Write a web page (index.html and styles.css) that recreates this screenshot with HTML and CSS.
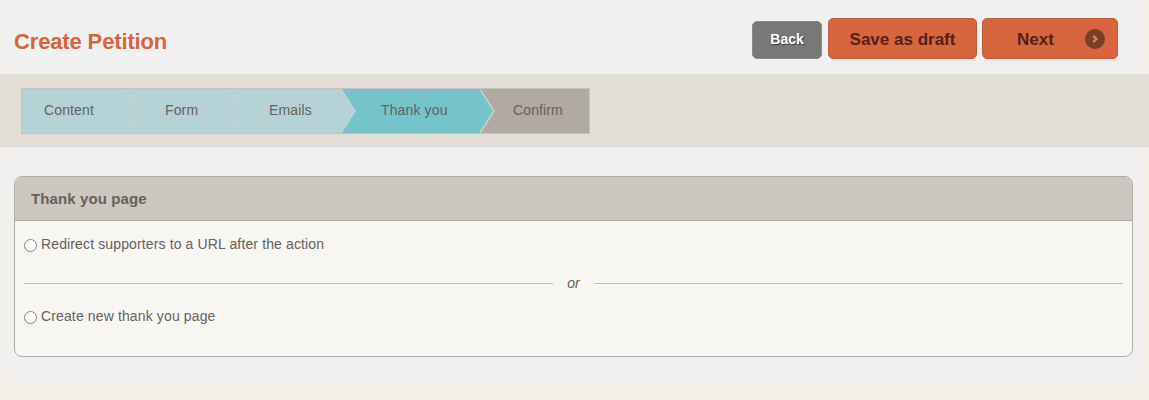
FILE: index.html
```html
<!DOCTYPE html>
<html lang="en">
<head>
<meta charset="utf-8">
<title>Create Petition</title>
<link rel="stylesheet" href="styles.css">
</head>
<body>
<div class="page">
  <header class="top">
    <h1 class="title">Create Petition</h1>
    <div class="actions">
      <a class="btn btn-back">Back</a>
      <a class="btn btn-draft">Save as draft</a>
      <a class="btn btn-next"><span>Next</span>
        <svg class="next-icon" width="20" height="20" viewBox="0 0 20 20"><circle cx="10" cy="10" r="10" fill="#7a3d25"/><path d="M8.2 6.8 11.4 10 8.2 13.2" fill="none" stroke="#c98a63" stroke-width="2.4"/></svg>
      </a>
    </div>
  </header>
  <nav class="band">
    <ol class="steps">
      <li class="step step-content">Content<svg class="arrow" width="15" height="44" viewBox="0 0 15 44"><polygon points="0,0 14,22 0,44" fill="#b5d3d7"/><polyline points="0,0 14,22 0,44" fill="none" stroke="#c6d0d1" stroke-width="1.5"/></svg></li>
      <li class="step step-form">Form<svg class="arrow" width="15" height="44" viewBox="0 0 15 44"><polygon points="0,0 14,22 0,44" fill="#b5d3d7"/><polyline points="0,0 14,22 0,44" fill="none" stroke="#c6d0d1" stroke-width="1.5"/></svg></li>
      <li class="step step-emails">Emails<svg class="arrow" width="15" height="44" viewBox="0 0 15 44"><polygon points="0,0 14,22 0,44" fill="#b5d3d7"/><polyline points="0,0 14,22 0,44" fill="none" stroke="#c6d0d1" stroke-width="1.5"/></svg></li>
      <li class="step step-thanks">Thank you<svg class="arrow" width="15" height="44" viewBox="0 0 15 44"><polygon points="0,0 14,22 0,44" fill="#75c4cc"/><polyline points="0,0 14,22 0,44" fill="none" stroke="#c6d0d1" stroke-width="1.5"/></svg></li>
      <li class="step step-confirm">Confirm</li>
    </ol>
  </nav>
  <section class="card">
    <h2 class="card-head">Thank you page</h2>
    <div class="card-body">
      <label class="option"><input type="radio" name="ty" class="radio">Redirect supporters to a URL after the action</label>
      <div class="divider"><span>or</span></div>
      <label class="option"><input type="radio" name="ty" class="radio">Create new thank you page</label>
    </div>
  </section>
</div>
</body>
</html>
```
FILE: styles.css
```css
* { box-sizing: border-box; }
html, body { margin: 0; padding: 0; }
body {
  background: #f4efe8;
  font-family: "Liberation Sans", Arial, sans-serif;
  font-size: 14px;
  letter-spacing: 0.13px;
  color: #66605e;
  height: 400px;
  overflow: hidden;
}
.page {
  margin: 0 6px 0 3px;
  height: 380px;
  background: #f0f0f0;
  border-radius: 0 0 5px 5px;
}
.top {
  height: 74px;
  display: flex;
  align-items: flex-start;
  justify-content: space-between;
  padding: 18px 25px 0 11px;
}
.title {
  margin: 11px 0 0;
  font-size: 22px;
  line-height: 26px;
  font-weight: 700;
  letter-spacing: -0.14px;
  color: #d9633d;
}
.actions {
  display: flex;
  align-items: flex-end;
  gap: 5px;
  height: 41px;
}
.btn {
  display: flex;
  align-items: center;
  font-weight: 700;
  border-radius: 5px;
}
.btn-back {
  width: 70px;
  height: 38px;
  margin-right: 1px;
  padding-bottom: 2px;
  justify-content: center;
  background: #7a7876;
  border: 1px solid #8c8a88;
  color: #fff;
  font-size: 14px;
  letter-spacing: 0;
  text-shadow: 1px 1px 1px #3c3a38;
}
.btn-draft, .btn-next {
  height: 41px;
  padding-top: 2px;
  background: #d9653f;
  border: 1px solid #c65a37;
  color: #55201a;
  font-size: 17px;
  letter-spacing: 0;
}
.btn-draft { width: 149px; justify-content: center; }
.btn-next { width: 136px; padding-left: 34px; }
.next-icon { margin-left: 31px; margin-top: -2px; }
.band {
  margin: 0 -6px 0 -3px;
  height: 73px;
  background: #e2ddd6;
  padding: 14px 21px;
}
.steps {
  list-style: none;
  margin: 0;
  padding: 0;
  display: flex;
  width: 569px;
  height: 46px;
  border: 1px solid #c6c3be;
  background: #b5d3d7;
}
.step {
  position: relative;
  height: 44px;
  line-height: 42px;
  padding-left: 39px;
  color: #66605e;
}
.arrow { position: absolute; left: calc(100% - 1px); top: 0; z-index: 1; }
.step-content { width: 104px; padding-left: 22px; }
.step-form { width: 104px; }
.step-emails { width: 112px; }
.step-thanks { width: 139px; background: #75c4cc; }
.step-confirm { flex: 1; background: #b0aaa3; padding-left: 32px; }
.card {
  margin: 29px 10px 0 11px;
  height: 181px;
  border: 1px solid #b0aba5;
  border-radius: 8px;
  background: #f8f6f2;
  overflow: hidden;
}
.card-head {
  margin: 0;
  height: 44px;
  padding-left: 16px;
  line-height: 44px;
  font-size: 15px;
  font-weight: 700;
  letter-spacing: 0.1px;
  background: #ccc7bf;
  border-bottom: 1px solid #b0aba5;
}
.card-body { padding: 14px 9px 0; }
.option { display: flex; align-items: center; height: 18px; }
.radio {
  appearance: none;
  margin: 2px 4px 0 0;
  width: 13px;
  height: 13px;
  border: 1px solid #858585;
  border-radius: 50%;
  background: #fff;
}
.divider {
  display: flex;
  align-items: center;
  margin: 22px 0 16px;
  height: 16px;
  font-style: italic;
}
.divider::before, .divider::after {
  content: "";
  flex: 1;
  height: 1px;
  background: #c2bdbb;
}
.divider span { padding: 0 14px; }
```
